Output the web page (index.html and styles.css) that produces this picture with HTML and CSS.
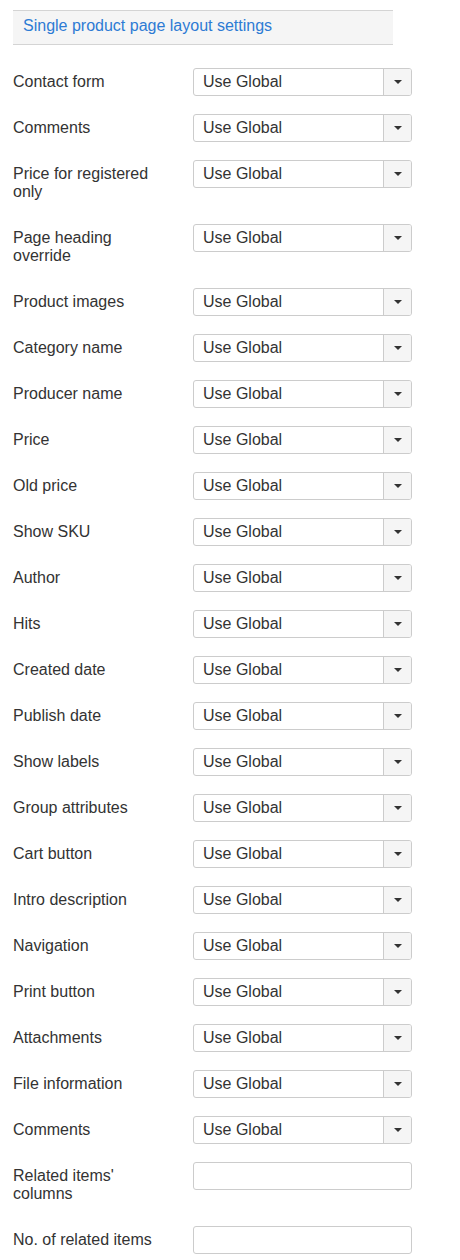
FILE: index.html
```html
<!DOCTYPE html>
<html>
<head>
<meta charset="utf-8">
<link rel="stylesheet" href="styles.css">
</head>
<body>
<div class="page">
  <div class="section-head">Single product page layout settings</div>
  <div class="form">
    <div class="row"><div class="label">Contact form</div><div class="select"><span class="value">Use Global</span><span class="btn"><i class="caret"></i></span></div></div>
    <div class="row"><div class="label">Comments</div><div class="select"><span class="value">Use Global</span><span class="btn"><i class="caret"></i></span></div></div>
    <div class="row"><div class="label">Price for registered only</div><div class="select"><span class="value">Use Global</span><span class="btn"><i class="caret"></i></span></div></div>
    <div class="row"><div class="label">Page heading override</div><div class="select"><span class="value">Use Global</span><span class="btn"><i class="caret"></i></span></div></div>
    <div class="row"><div class="label">Product images</div><div class="select"><span class="value">Use Global</span><span class="btn"><i class="caret"></i></span></div></div>
    <div class="row"><div class="label">Category name</div><div class="select"><span class="value">Use Global</span><span class="btn"><i class="caret"></i></span></div></div>
    <div class="row"><div class="label">Producer name</div><div class="select"><span class="value">Use Global</span><span class="btn"><i class="caret"></i></span></div></div>
    <div class="row"><div class="label">Price</div><div class="select"><span class="value">Use Global</span><span class="btn"><i class="caret"></i></span></div></div>
    <div class="row"><div class="label">Old price</div><div class="select"><span class="value">Use Global</span><span class="btn"><i class="caret"></i></span></div></div>
    <div class="row"><div class="label">Show SKU</div><div class="select"><span class="value">Use Global</span><span class="btn"><i class="caret"></i></span></div></div>
    <div class="row"><div class="label">Author</div><div class="select"><span class="value">Use Global</span><span class="btn"><i class="caret"></i></span></div></div>
    <div class="row"><div class="label">Hits</div><div class="select"><span class="value">Use Global</span><span class="btn"><i class="caret"></i></span></div></div>
    <div class="row"><div class="label">Created date</div><div class="select"><span class="value">Use Global</span><span class="btn"><i class="caret"></i></span></div></div>
    <div class="row"><div class="label">Publish date</div><div class="select"><span class="value">Use Global</span><span class="btn"><i class="caret"></i></span></div></div>
    <div class="row"><div class="label">Show labels</div><div class="select"><span class="value">Use Global</span><span class="btn"><i class="caret"></i></span></div></div>
    <div class="row"><div class="label">Group attributes</div><div class="select"><span class="value">Use Global</span><span class="btn"><i class="caret"></i></span></div></div>
    <div class="row"><div class="label">Cart button</div><div class="select"><span class="value">Use Global</span><span class="btn"><i class="caret"></i></span></div></div>
    <div class="row"><div class="label">Intro description</div><div class="select"><span class="value">Use Global</span><span class="btn"><i class="caret"></i></span></div></div>
    <div class="row"><div class="label">Navigation</div><div class="select"><span class="value">Use Global</span><span class="btn"><i class="caret"></i></span></div></div>
    <div class="row"><div class="label">Print button</div><div class="select"><span class="value">Use Global</span><span class="btn"><i class="caret"></i></span></div></div>
    <div class="row"><div class="label">Attachments</div><div class="select"><span class="value">Use Global</span><span class="btn"><i class="caret"></i></span></div></div>
    <div class="row"><div class="label">File information</div><div class="select"><span class="value">Use Global</span><span class="btn"><i class="caret"></i></span></div></div>
    <div class="row"><div class="label">Comments</div><div class="select"><span class="value">Use Global</span><span class="btn"><i class="caret"></i></span></div></div>
    <div class="row"><div class="label">Related items' columns</div><div class="input"></div></div>
    <div class="row"><div class="label">No. of related items</div><div class="input"></div></div>
  </div>
</div>
</body>
</html>
```
FILE: styles.css
```css
html, body {
  margin: 0;
  padding: 0;
  background: #fff;
}
.page {
  padding: 10px 13px 0 13px;
  font-family: "Liberation Sans", Arial, sans-serif;
  font-size: 16px;
  color: #333;
}
.section-head {
  width: 380px;
  box-sizing: border-box;
  height: 35px;
  background: #f5f5f5;
  border-top: 1px solid #d4d4d4;
  border-bottom: 1px solid #d4d4d4;
  padding: 6px 10px 0 10px;
  line-height: 18px;
  color: #2d7bd4;
}
.form {
  margin-top: 23px;
  display: flex;
  flex-direction: column;
  gap: 18px;
}
.row {
  display: flex;
  align-items: flex-start;
}
.label {
  width: 150px;
  margin-right: 30px;
  padding: 5px 0;
  line-height: 18px;
}
.select, .input {
  width: 219px;
  height: 28px;
  box-sizing: border-box;
  border: 1px solid #ccc;
  border-radius: 3px;
  background: #fff;
  display: flex;
}
.value {
  flex: 1;
  padding: 4px 9px;
  line-height: 18px;
}
.btn {
  width: 27px;
  border-left: 1px solid #ccc;
  background: #f5f5f5;
  border-radius: 0 2px 2px 0;
  display: flex;
  align-items: center;
  justify-content: center;
}
.caret {
  width: 0;
  height: 0;
  border-top: 4px solid #333;
  border-left: 4px solid transparent;
  border-right: 4px solid transparent;
}
```
